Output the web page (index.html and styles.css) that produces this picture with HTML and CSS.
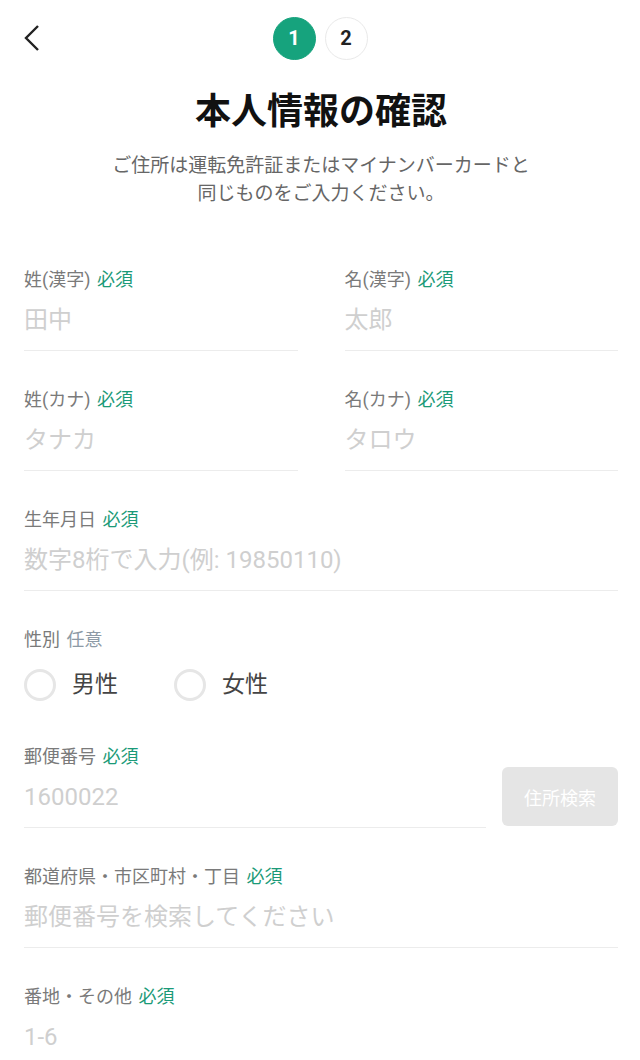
FILE: index.html
```html
<!DOCTYPE html>
<html lang="ja">
<head>
    <meta charset="UTF-8">
    <meta name="viewport" content="width=device-width, initial-scale=1.0">
    <title>本人情報の確認</title>
    <link rel="stylesheet" href="styles.css">
</head>
<body>
    <header class="top-bar">
        <a class="back" href="#">
            <svg width="16" height="28" viewBox="0 0 16 28">
                <path d="M14 2 L2 14 L14 26" fill="none" stroke="#222" stroke-width="2.4" stroke-linejoin="miter"/>
            </svg>
        </a>
        <div class="steps">
            <span class="step active">1</span>
            <span class="step">2</span>
        </div>
        <div></div>
    </header>

    <main>
        <h1 class="title">本人情報の確認</h1>
        <p class="lead">ご住所は運転免許証またはマイナンバーカードと<br>同じものをご入力ください。</p>

        <form class="form">
            <div class="row two">
                <div class="field">
                    <label>姓(漢字) <span class="req">必須</span></label>
                    <input type="text" placeholder="田中">
                </div>
                <div class="field">
                    <label>名(漢字) <span class="req">必須</span></label>
                    <input type="text" placeholder="太郎">
                </div>
            </div>
            <div class="row two">
                <div class="field">
                    <label>姓(カナ) <span class="req">必須</span></label>
                    <input type="text" placeholder="タナカ">
                </div>
                <div class="field">
                    <label>名(カナ) <span class="req">必須</span></label>
                    <input type="text" placeholder="タロウ">
                </div>
            </div>
            <div class="field">
                <label>生年月日 <span class="req">必須</span></label>
                <input type="text" placeholder="数字8桁で入力(例: 19850110)">
            </div>
            <div class="field gender">
                <label>性別 <span class="opt">任意</span></label>
                <div class="radios">
                    <span class="radio"><span class="dot"></span>男性</span>
                    <span class="radio"><span class="dot"></span>女性</span>
                </div>
            </div>
            <div class="row zip">
                <div class="field">
                    <label>郵便番号 <span class="req">必須</span></label>
                    <input type="text" placeholder="1600022">
                </div>
                <button type="button" class="search">住所検索</button>
            </div>
            <div class="field">
                <label>都道府県・市区町村・丁目 <span class="req">必須</span></label>
                <input type="text" placeholder="郵便番号を検索してください">
            </div>
            <div class="field">
                <label>番地・その他 <span class="req">必須</span></label>
                <input type="text" placeholder="1-6">
            </div>
        </form>
    </main>
</body>
</html>
```
FILE: styles.css
```css
body {
    margin: 0;
    padding: 0;
    background-color: #fff;
    font-family: Roboto, "Noto Sans CJK JP", sans-serif;
    color: #222;
}
.top-bar {
    display: grid;
    grid-template-columns: 1fr auto 1fr;
    align-items: center;
    padding: 16px 24px 0 24px;
    height: 44px;
}
.back {
    display: flex;
    align-items: center;
    width: 16px;
}
.steps {
    display: flex;
    gap: 9px;
}
.step {
    width: 43px;
    height: 43px;
    border-radius: 50%;
    border: 1.5px solid #e9e9e9;
    box-sizing: border-box;
    display: flex;
    align-items: center;
    justify-content: center;
    font-size: 20px;
    font-weight: bold;
    color: #222;
}
.step.active {
    background-color: #16a37d;
    border-color: #16a37d;
    color: #fff;
}
main {
    padding: 0 22px 0 24px;
}
.title {
    margin: 28px 0 0 0;
    text-align: center;
    font-size: 36px;
    line-height: 48px;
    font-weight: bold;
    color: #111;
}
.lead {
    margin: 16px 0 0 0;
    text-align: center;
    font-size: 19px;
    line-height: 28px;
    color: #666;
}
.form {
    margin-top: 60px;
}
.row.two {
    display: grid;
    grid-template-columns: minmax(0, 1fr) minmax(0, 1fr);
    column-gap: 47px;
}
.field {
    display: flex;
    flex-direction: column;
    min-width: 0;
    margin-bottom: 37px;
}
.field label {
    font-size: 18px;
    line-height: 24px;
    color: #7a7a7a;
}
.req {
    color: #1b9a78;
    margin-left: 2px;
}
.opt {
    color: #8d9aa6;
    margin-left: 2px;
}
.field input {
    width: 100%;
    min-width: 0;
    margin-top: 13px;
    border: none;
    border-bottom: 1px solid #ececec;
    padding: 0 0 15px 0;
    font-family: Roboto, "Noto Sans CJK JP", sans-serif;
    font-size: 24px;
    line-height: 30px;
    height: 46px;
    box-sizing: border-box;
    outline: none;
    color: #222;
    background: none;
}
.field input::placeholder {
    color: #cfcfcf;
}
.gender {
    margin-bottom: 44px;
}
.radios {
    display: flex;
    gap: 56px;
    margin-top: 17px;
}
.radio {
    display: flex;
    align-items: center;
    gap: 16px;
    font-size: 23px;
    line-height: 32px;
    color: #444;
}
.dot {
    width: 32px;
    height: 32px;
    border: 3px solid #e6e6e6;
    border-radius: 50%;
    box-sizing: border-box;
}
.row.zip {
    display: flex;
    align-items: flex-start;
    gap: 16px;
}
.row.zip .field {
    flex: 1;
}
.search {
    width: 116px;
    height: 59px;
    margin-top: 22px;
    border: none;
    border-radius: 6px;
    background-color: #e5e5e5;
    color: #fff;
    font-family: Roboto, "Noto Sans CJK JP", sans-serif;
    font-size: 18px;
}
```
